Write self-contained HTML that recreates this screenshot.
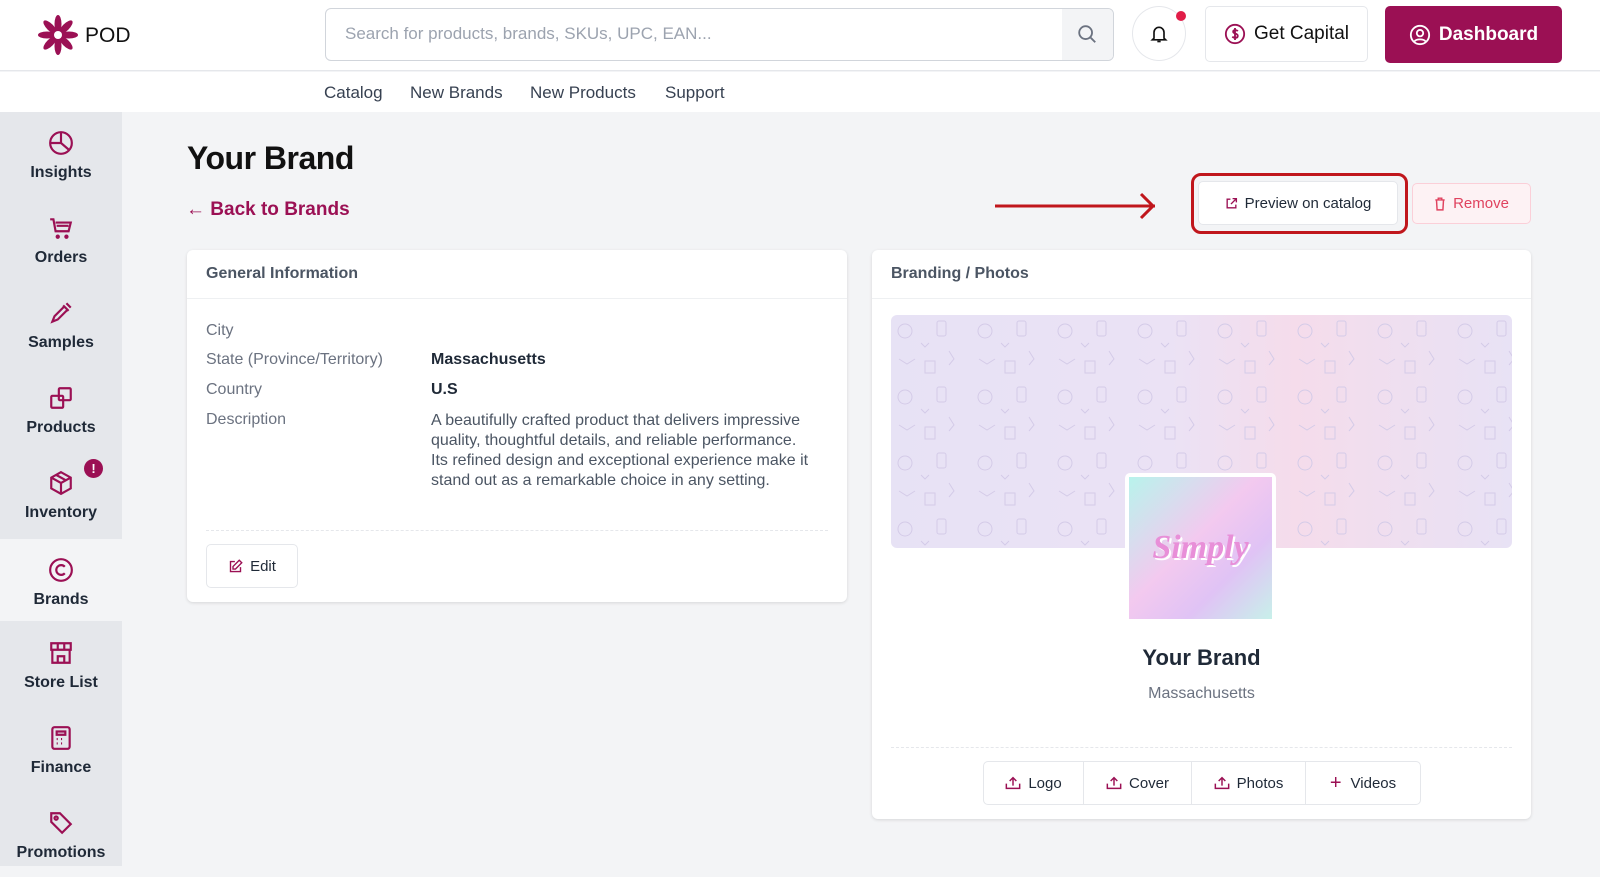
<!DOCTYPE html>
<html><head><meta charset="utf-8"><style>
*{box-sizing:border-box;margin:0;padding:0}
body{width:1600px;height:866px;overflow:hidden;font-family:"Liberation Sans",sans-serif;background:#f3f4f6;position:relative;color:#111827}
.a{position:absolute}
svg{display:block}
.hdr{left:0;top:0;width:1600px;height:71px;background:#fff;border-bottom:1px solid #e5e7eb}
.nav{left:0;top:72px;width:1600px;height:40px;background:#fff}
.nav span{position:absolute;top:11px;font-size:17px;color:#374151}
.side{left:0;top:112px;width:122px;height:754px;background:#e5e7eb}
.si{position:absolute;left:0;width:122px;height:85px;text-align:center}
.si svg{margin:18px auto 0}
.si div{font-size:16px;font-weight:bold;color:#1f2937;margin-top:8px}
.card{background:#fff;border-radius:6px;box-shadow:0 1px 3px rgba(0,0,0,.12)}
.ch{height:49px;border-bottom:1px solid #eef0f2;padding:15px 19px;font-size:16px;font-weight:bold;color:#4b5563}
.lbl{position:absolute;left:19px;font-size:16px;color:#6b7280}
.val{position:absolute;left:244px;font-size:16px;color:#1f2937}
.btn{position:absolute;background:#fff;border:1px solid #e5e7eb;border-radius:5px;font-size:15px;color:#1f2937;display:flex;align-items:center;justify-content:center;gap:7px}
</style></head><body>
<div class="a hdr"></div>
<div class="a" style="left:37px;top:14px">
<svg width="42" height="42" viewBox="0 0 42 42"><g fill="#9b1054" transform="translate(21 21)">
<ellipse cx="0" cy="-11" rx="3.5" ry="9"/><ellipse cx="0" cy="-11" rx="3.5" ry="9" transform="rotate(45)"/><ellipse cx="0" cy="-11" rx="3.5" ry="9" transform="rotate(90)"/><ellipse cx="0" cy="-11" rx="3.5" ry="9" transform="rotate(135)"/><ellipse cx="0" cy="-11" rx="3.5" ry="9" transform="rotate(180)"/><ellipse cx="0" cy="-11" rx="3.5" ry="9" transform="rotate(225)"/><ellipse cx="0" cy="-11" rx="3.5" ry="9" transform="rotate(270)"/><ellipse cx="0" cy="-11" rx="3.5" ry="9" transform="rotate(315)"/><circle r="4" fill="#fff"/></g></svg></div>
<div class="a" style="left:85px;top:24px;font-size:21px;color:#111">POD</div>
<div class="a" style="left:325px;top:8px;width:789px;height:53px;border:1px solid #d1d5db;border-radius:6px;background:#fff;overflow:hidden">
<div class="a" style="left:19px;top:15px;font-size:17px;color:#9ca3af">Search for products, brands, SKUs, UPC, EAN...</div>
<div class="a" style="right:0;top:0;width:51px;height:53px;background:#f3f4f6"><svg style="margin:14px 0 0 14px" width="22" height="22" viewBox="0 0 24 24" fill="none" stroke="#6b7280" stroke-width="2"><circle cx="10.5" cy="10.5" r="7"/><path d="M16 16l5 5"/></svg></div></div>
<div class="a" style="left:1132px;top:6px;width:54px;height:55px;border:1px solid #e5e7eb;border-radius:50%;background:#fff"><svg style="margin:16px 0 0 16px" width="20" height="22" viewBox="0 0 24 24" fill="none" stroke="#111" stroke-width="2"><path d="M6 17V10a6 6 0 0112 0v7l2 2H4z"/><path d="M10 21h4"/></svg></div>
<div class="a" style="left:1176px;top:11px;width:10px;height:10px;border-radius:50%;background:#e11d48"></div>
<div class="btn" style="left:1205px;top:6px;width:163px;height:56px;font-size:19px;color:#111;gap:8px"><svg width="22" height="22" viewBox="0 0 24 24" fill="none" stroke="#9b1054" stroke-width="2"><circle cx="12" cy="12" r="10"/><path d="M15 9c-1-1.5-5-2-5 .5S15 11 15 14s-4 2.5-6 1M12 5.5v13"/></svg>Get Capital</div>
<div class="a" style="left:1385px;top:6px;width:177px;height:57px;background:#9b1054;border-radius:5px;color:#fff;font-size:19px;font-weight:bold;display:flex;align-items:center;justify-content:center;gap:8px"><svg width="22" height="22" viewBox="0 0 24 24" fill="none" stroke="#fff" stroke-width="2"><circle cx="12" cy="12" r="10"/><circle cx="12" cy="10" r="3.5"/><path d="M6 19c2-3 10-3 12 0"/></svg>Dashboard</div>
<div class="a nav"><span style="left:324px">Catalog</span><span style="left:410px">New Brands</span><span style="left:530px">New Products</span><span style="left:665px">Support</span></div>
<div class="a side">
<div class="si" style="top:0"><svg width="26" height="26" viewBox="0 0 24 24" fill="none" stroke="#9b1054" stroke-width="2"><circle cx="12" cy="12" r="10"/><path d="M12 2v10l7 6M12 12H2"/></svg><div>Insights</div></div>
<div class="si" style="top:85px"><svg width="26" height="26" viewBox="0 0 24 24" fill="none" stroke="#9b1054" stroke-width="2"><path d="M2 4h3l2 11h12l2-8H7M8 10h11"/><circle cx="9" cy="20" r="1"/><circle cx="17" cy="20" r="1"/></svg><div>Orders</div></div>
<div class="si" style="top:170px"><svg width="26" height="26" viewBox="0 0 24 24" fill="none" stroke="#9b1054" stroke-width="2"><path d="M14 5l5 5M4 20l2-5 9-9 3 3-9 9zM17 3l4 4"/></svg><div>Samples</div></div>
<div class="si" style="top:255px"><svg width="26" height="26" viewBox="0 0 24 24" fill="none" stroke="#9b1054" stroke-width="2"><rect x="3" y="10" width="11" height="11" rx="1"/><rect x="10" y="3" width="11" height="11" rx="1"/></svg><div>Products</div></div>
<div class="si" style="top:340px"><svg width="26" height="26" viewBox="0 0 24 24" fill="none" stroke="#9b1054" stroke-width="2"><path d="M12 2l9 5v10l-9 5-9-5V7zM3 7l9 5 9-5M12 12v10M7.5 4.5l9 5"/></svg><div>Inventory</div></div>
<div class="a" style="left:84px;top:347px;width:19px;height:19px;border-radius:50%;background:#9b1054;color:#fff;font-size:13px;font-weight:bold;text-align:center;line-height:19px">!</div>
<div class="si" style="top:427px;background:#f3f4f6;height:82px"><svg width="26" height="26" viewBox="0 0 24 24" fill="none" stroke="#9b1054" stroke-width="2"><circle cx="12" cy="12" r="10"/><path d="M15.5 9a4.5 4.5 0 100 6"/></svg><div>Brands</div></div>
<div class="si" style="top:510px"><svg width="26" height="26" viewBox="0 0 24 24" fill="none" stroke="#9b1054" stroke-width="2"><path d="M3 3h18v6H3zM9 3v6M15 3v6M4 9v12h16V9M9 21v-6h6v6"/></svg><div>Store List</div></div>
<div class="si" style="top:595px"><svg width="26" height="26" viewBox="0 0 24 24" fill="none" stroke="#9b1054" stroke-width="2"><rect x="4" y="2" width="16" height="20" rx="2"/><path d="M8 6h8v3H8zM8 13h1M12 13h1M16 13h0M8 17h1M12 17h1M16 17h0"/></svg><div>Finance</div></div>
<div class="si" style="top:680px"><svg width="26" height="26" viewBox="0 0 24 24" fill="none" stroke="#9b1054" stroke-width="2"><path d="M3 3h8l10 10-8 8L3 11z"/><circle cx="7.5" cy="7.5" r="1.5"/></svg><div>Promotions</div></div>
</div>
<div class="a" style="left:187px;top:140px;font-size:32px;font-weight:bold;color:#111;letter-spacing:-0.5px">Your Brand</div>
<div class="a" style="left:186px;top:199px;font-size:19px;font-weight:bold;color:#9b1054">← Back to Brands</div>
<svg class="a" style="left:995px;top:192px" width="165" height="28" viewBox="0 0 165 28"><path d="M0 14h160M146 2l12 12-12 12" fill="none" stroke="#c0161c" stroke-width="3"/></svg>
<div class="a" style="left:1191px;top:173px;width:217px;height:61px;border:3px solid #c0161c;border-radius:10px"></div>
<div class="btn" style="left:1198px;top:181px;width:200px;height:44px;font-size:15px"><svg width="13" height="13" viewBox="0 0 24 24" fill="none" stroke="#9b1054" stroke-width="2.5"><path d="M10 4H4v16h16v-6M14 3h7v7M21 3l-10 10"/></svg>Preview on catalog</div>
<div class="btn" style="left:1412px;top:183px;width:119px;height:41px;border-color:#fbcfd8;background:#fdf2f4;color:#e0435f"><svg width="12" height="14" viewBox="0 0 20 24" fill="none" stroke="#e0435f" stroke-width="2.5"><path d="M2 5h16M7 5V2h6v3M4 5l1 17h10l1-17"/></svg>Remove</div>
<div class="a card" style="left:187px;top:250px;width:660px;height:352px">
<div class="ch">General Information</div>
<div class="lbl" style="top:72px">City</div>
<div class="lbl" style="top:101px">State (Province/Territory)</div><div class="val" style="top:101px;font-weight:bold">Massachusetts</div>
<div class="lbl" style="top:131px">Country</div><div class="val" style="top:131px;font-weight:bold">U.S</div>
<div class="lbl" style="top:161px">Description</div><div class="val" style="top:161px;width:386px;line-height:20px;color:#4b5563">A beautifully crafted product that delivers impressive quality, thoughtful details, and reliable performance. Its refined design and exceptional experience make it stand out as a remarkable choice in any setting.</div>
<div class="a" style="left:19px;top:280px;width:622px;border-top:1px dashed #e5e7eb"></div>
<div class="btn" style="left:19px;top:294px;width:92px;height:44px"><svg width="15" height="15" viewBox="0 0 24 24" fill="none" stroke="#9b1054" stroke-width="2.2"><path d="M11 4H4v16h16v-7M18 2l4 4-10 10H8v-4z"/></svg>Edit</div>
</div>
<div class="a card" style="left:872px;top:250px;width:659px;height:569px">
<div class="ch">Branding / Photos</div>
<div class="a" style="left:19px;top:65px;width:621px;height:233px;border-radius:6px;background:linear-gradient(90deg,#e7e2f5 0%,#ebe2f5 45%,#f5dceb 65%,#e8e2f5 100%);overflow:hidden">
<svg width="621" height="233"><defs><pattern id="p" width="80" height="66" patternUnits="userSpaceOnUse"><g fill="none" stroke="#d4cbe8" stroke-width="1"><circle cx="14" cy="16" r="7"/><rect x="46" y="6" width="9" height="15" rx="2"/><path d="M8 44l8 5 8-5M58 36l5 8-5 6M30 28l4 4 4-4"/><rect x="34" y="46" width="10" height="12"/></g></pattern></defs><rect width="621" height="233" fill="url(#p)"/></svg></div>
<div class="a" style="left:253px;top:223px;width:151px;height:150px;background:#fff;border-radius:5px;padding:4px">
<div style="width:143px;height:142px;background:linear-gradient(135deg,#b8f3ec 0%,#f3c9ef 45%,#e0c3f5 70%,#c8f0ea 100%);display:flex;align-items:center;justify-content:center"><span style="font-family:'Liberation Serif',serif;font-style:italic;font-weight:bold;font-size:34px;color:#e88fd8;text-shadow:2px 2px 0 #fff">Simply</span></div></div>
<div class="a" style="left:0;width:659px;top:395px;text-align:center;font-size:22px;font-weight:bold;color:#1f2937">Your Brand</div>
<div class="a" style="left:0;width:659px;top:435px;text-align:center;font-size:16px;color:#6b7280">Massachusetts</div>
<div class="a" style="left:19px;top:497px;width:621px;border-top:1px dashed #e5e7eb"></div>
<div class="a" style="left:111px;top:511px;width:438px;height:44px;border:1px solid #e5e7eb;border-radius:5px;display:flex;font-size:15px;color:#1f2937">
<div style="width:100px;display:flex;align-items:center;justify-content:center;gap:7px;border-right:1px solid #e5e7eb"><svg width="16" height="14" viewBox="0 0 24 20" fill="none" stroke="#9b1054" stroke-width="2.2"><path d="M2 11v7h20v-7M12 14V2M7 7l5-5 5 5"/></svg>Logo</div>
<div style="width:108px;display:flex;align-items:center;justify-content:center;gap:7px;border-right:1px solid #e5e7eb"><svg width="16" height="14" viewBox="0 0 24 20" fill="none" stroke="#9b1054" stroke-width="2.2"><path d="M2 11v7h20v-7M12 14V2M7 7l5-5 5 5"/></svg>Cover</div>
<div style="width:114px;display:flex;align-items:center;justify-content:center;gap:7px;border-right:1px solid #e5e7eb"><svg width="16" height="14" viewBox="0 0 24 20" fill="none" stroke="#9b1054" stroke-width="2.2"><path d="M2 11v7h20v-7M12 14V2M7 7l5-5 5 5"/></svg>Photos</div>
<div style="flex:1;display:flex;align-items:center;justify-content:center;gap:9px"><span style="color:#9b1054;font-size:20px">+</span>Videos</div>
</div>
</div>
</body></html>
